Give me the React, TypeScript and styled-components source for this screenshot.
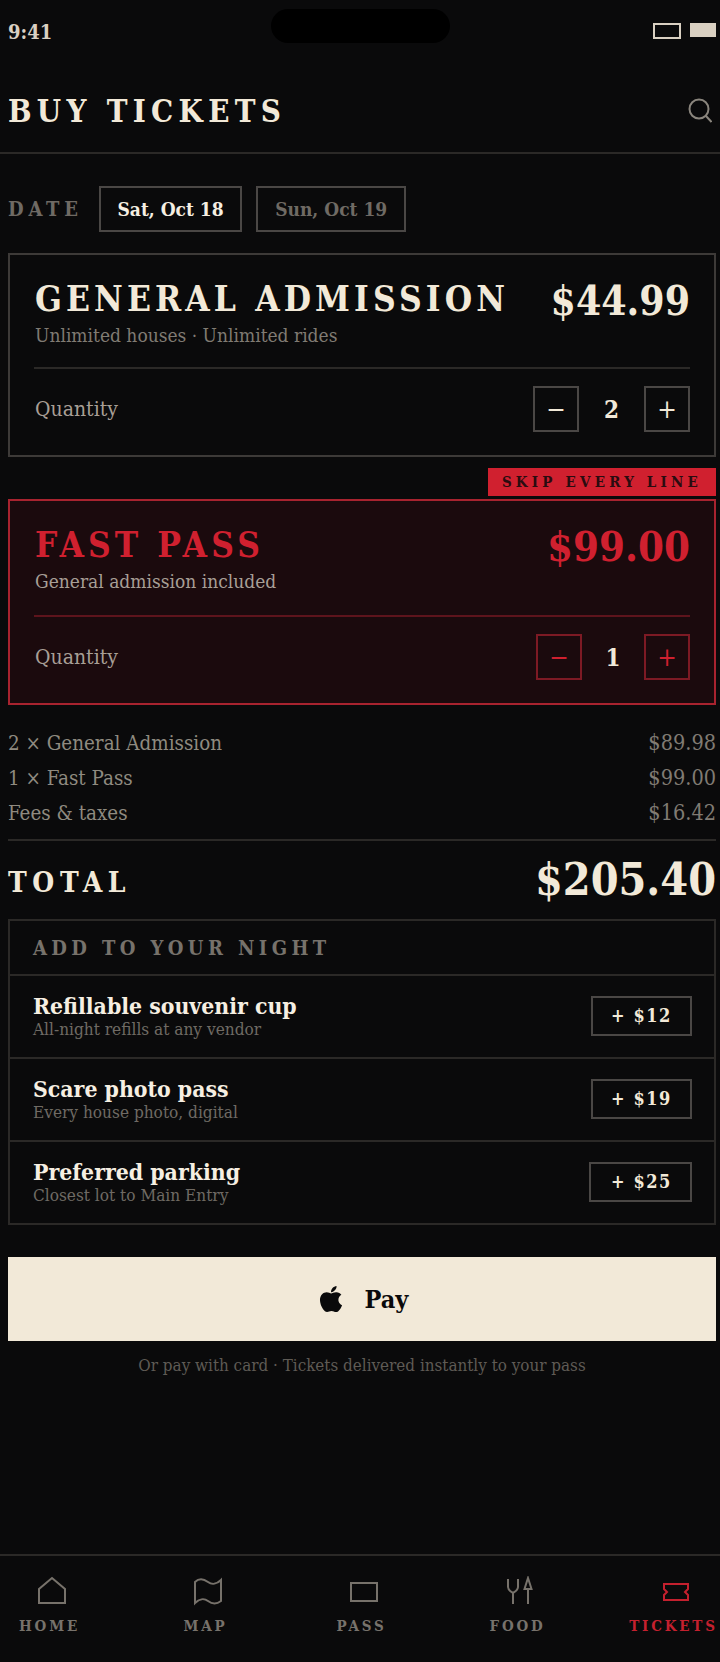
import styled, { createGlobalStyle } from "styled-components";
import { FaApple } from "react-icons/fa";

const serif = `"DejaVu Serif Condensed", "DejaVu Serif", "Liberation Serif", serif`;

const GlobalStyle = createGlobalStyle`
  html, body {
    margin: 0;
    padding: 0;
    background: #0a0a0b;
  }
  * { box-sizing: border-box; }
`;

const Page = styled.div`
  width: 720px;
  height: 1662px;
  display: flex;
  flex-direction: column;
  background: #0a0a0b;
  color: #f2e9d8;
  font-family: ${serif};
  overflow: hidden;
`;

const StatusBar = styled.div`
  height: 60px;
  padding: 22px 4px 0 8px;
  display: flex;
  justify-content: space-between;
  align-items: flex-start;
  position: relative;
`;

const Clock = styled.span`
  font-size: 20px;
  line-height: 20px;
  font-weight: 700;
  color: #d9d0c2;
`;

const Notch = styled.div`
  position: absolute;
  left: 271px;
  top: 9px;
  width: 179px;
  height: 34px;
  border-radius: 17px;
  background: #000;
`;

const StatusIcons = styled.div`
  display: flex;
  gap: 9px;
  padding-top: 1px;
`;

const Signal = styled.div`
  width: 28px;
  height: 16px;
  border: 2px solid #d9d0c2;
`;

const Battery = styled.div`
  width: 26px;
  height: 14px;
  background: #d9d0c2;
`;

const Header = styled.header`
  height: 94px;
  padding: 10px 8px 0;
  display: flex;
  justify-content: space-between;
  align-items: center;
  border-bottom: 2px solid #2b2927;
`;

const Title = styled.h1`
  margin: 0;
  font-size: 31px;
  font-weight: 700;
  letter-spacing: 5.3px;
  color: #f2e9d8;
`;

const SearchIcon = styled.svg`
  display: block;
  stroke: #8a857d;
`;

const Content = styled.main`
  padding: 0 4px 0 8px;
  display: flex;
  flex-direction: column;
`;

const DateRow = styled.div`
  margin: 32px 0 21px;
  display: flex;
  align-items: center;
`;

const DateLabel = styled.span`
  width: 91px;
  font-size: 20px;
  font-weight: 700;
  letter-spacing: 4.8px;
  color: #6f6a64;
`;

const DateChip = styled.div<{ $active?: boolean }>`
  height: 46px;
  padding: 0 ${(p) => (p.$active ? 16.5 : 17)}px;
  margin-right: 14px;
  display: flex;
  align-items: center;
  border: 2px solid #4a4745;
  font-size: 19px;
  font-weight: 700;
  color: ${(p) => (p.$active ? "#f6efe2" : "#6f6a64")};
`;

const Card = styled.section<{ $fast?: boolean }>`
  padding: 24px 24px 23px 25px;
  border: 2px solid ${(p) => (p.$fast ? "#a8232f" : "#3d3a38")};
  background: ${(p) => (p.$fast ? "#1b0a0d" : "transparent")};
`;

const CardTop = styled.div`
  display: flex;
  justify-content: space-between;
  align-items: flex-start;
`;

const CardName = styled.h2<{ $fast?: boolean }>`
  margin: 0;
  font-size: 35px;
  line-height: 40px;
  font-weight: 700;
  letter-spacing: 4.1px;
  color: ${(p) => (p.$fast ? "#d0202f" : "#f2e9d8")};
`;

const CardPrice = styled.div<{ $fast?: boolean }>`
  height: 40px;
  padding-top: 2px;
  font-size: ${(p) => (p.$fast ? 41.5 : 40.5)}px;
  line-height: 40px;
  font-weight: 700;
  color: ${(p) => (p.$fast ? "#d0202f" : "#f2e9d8")};
`;

const CardSub = styled.p<{ $fast?: boolean }>`
  margin: 4px 0 0;
  font-size: 19px;
  line-height: 24px;
  color: ${(p) => (p.$fast ? "#a89f96" : "#807b73")};
`;

const CardDivider = styled.div<{ $fast?: boolean }>`
  height: 2px;
  margin: ${(p) => (p.$fast ? 22 : 20)}px 0 17px -1px;
  background: ${(p) => (p.$fast ? "#5e141c" : "#2b2927")};
`;

const QtyRow = styled.div`
  display: flex;
  justify-content: space-between;
  align-items: center;
`;

const QtyLabel = styled.span`
  font-size: 21px;
  color: #a89f96;
`;

const Stepper = styled.div`
  display: flex;
  align-items: center;
`;

const StepButton = styled.div<{ $fast?: boolean }>`
  width: 46px;
  height: 46px;
  display: flex;
  align-items: center;
  justify-content: center;
  border: 2px solid ${(p) => (p.$fast ? "#7d1a24" : "#4a4745")};
  font-size: 26px;
  font-weight: 400;
  color: ${(p) => (p.$fast ? "#d0202f" : "#f2e9d8")};
`;

const QtyValue = styled.span<{ $wide?: boolean }>`
  width: ${(p) => (p.$wide ? 65 : 62)}px;
  text-align: center;
  font-size: 24px;
  font-weight: 700;
`;

const TagRow = styled.div`
  display: flex;
  justify-content: flex-end;
  margin: 11px 0 3px;
`;

const Tag = styled.div`
  width: 228px;
  height: 28px;
  display: flex;
  align-items: center;
  justify-content: center;
  background: #d0202f;
  color: #2a0c10;
  font-size: 15px;
  font-weight: 700;
  letter-spacing: 4.2px;
`;

const Breakdown = styled.div`
  margin-top: 20px;
  display: flex;
  flex-direction: column;
`;

const LineItem = styled.div`
  height: 35px;
  display: flex;
  justify-content: space-between;
  align-items: center;
  font-size: 20.4px;
  color: #8f8a80;
`;

const LinePrice = styled.span`
  font-size: 21.5px;
  color: #807b73;
`;

const TotalRow = styled.div`
  margin-top: 9px;
  height: 80px;
  padding-top: 4px;
  border-top: 2px solid #2b2927;
  display: flex;
  justify-content: space-between;
  align-items: center;
`;

const TotalLabel = styled.span`
  font-size: 28px;
  font-weight: 700;
  letter-spacing: 5.6px;
`;

const TotalPrice = styled.span`
  margin-bottom: 6px;
  font-size: 44.5px;
  font-weight: 700;
`;

const Addons = styled.section`
  border: 2px solid #2b2927;
`;

const AddonsHeader = styled.div`
  height: 53px;
  padding: 0 23px;
  display: flex;
  align-items: center;
  font-size: 20px;
  font-weight: 700;
  letter-spacing: 4.4px;
  color: #77726b;
`;

const AddonRow = styled.div`
  height: 83px;
  padding: 0 22px 2px 23px;
  display: flex;
  justify-content: space-between;
  align-items: center;
  border-top: 2px solid #2b2927;
`;

const AddonName = styled.div`
  font-size: 22.8px;
  line-height: 26px;
  font-weight: 700;
  color: #f6efe2;
`;

const AddonSub = styled.div`
  font-size: 17.1px;
  line-height: 20px;
  color: #6f6a64;
`;

const AddButton = styled.div<{ $wide?: boolean }>`
  height: 40px;
  padding: 0 18px 0 ${(p) => (p.$wide ? 20 : 18)}px;
  display: flex;
  align-items: center;
  border: 2px solid #4a4745;
  font-size: 18px;
  font-weight: 700;
  letter-spacing: 1.6px;
`;

const PayButton = styled.div`
  margin-top: 32px;
  height: 84px;
  display: flex;
  align-items: center;
  justify-content: center;
  gap: 19px;
  background: #f2e9d8;
  color: #0a0a0b;
  font-size: 25px;
  font-weight: 700;
`;

const Footnote = styled.p`
  margin: 12px 0 0;
  text-align: center;
  font-size: 16.9px;
  line-height: 24px;
  color: #5f5b55;
`;

const TabBar = styled.nav`
  margin-top: auto;
  height: 108px;
  padding: 20px 0 0 3px;
  border-top: 2px solid #2b2927;
  display: grid;
  grid-template-columns: repeat(5, 156px);
  justify-content: center;
`;

const Tab = styled.div<{ $active?: boolean }>`
  display: flex;
  flex-direction: column;
  align-items: center;
  gap: 10px;
  color: ${(p) => (p.$active ? "#c4202e" : "#77726b")};
  font-size: 15px;
  line-height: 20px;
  font-weight: 700;
  letter-spacing: 2.8px;
  svg {
    display: block;
    margin-left: 4px;
  }
`;

const Icon = ({ children }: { children: React.ReactNode }) => (
  <svg width="30" height="30" viewBox="0 0 30 30" fill="none" stroke="currentColor" strokeWidth="2">
    {children}
  </svg>
);

const tabs = [
  { label: "HOME", icon: <path d="M2 27V13L15 2l13 11v14z" /> },
  { label: "MAP", icon: <path d="M2 6C6 2 11 3 15 6s9 2 13-2v21c-4 3-9 3-13 0s-9-2-13 2z" /> },
  { label: "PASS", icon: <rect x="2" y="7" width="26" height="18" /> },
  {
    label: "FOOD",
    icon: (
      <>
        <path d="M3 3v8c0 3 2 4 5 6 3-2 5-3 5-6V3M8 17v11" />
        <path d="M23 2l3.500 11h-7zM23 13v15" />
      </>
    ),
  },
  { label: "TICKETS", icon: <path d="M3 8h24v5l-3 3 3 3v5H3v-5l3-3-3-3z" />, active: true },
];

const addons = [
  { name: "Refillable souvenir cup", sub: "All-night refills at any vendor", price: "+ $12" },
  { name: "Scare photo pass", sub: "Every house photo, digital", price: "+ $19" },
  { name: "Preferred parking", sub: "Closest lot to Main Entry", price: "+ $25", wide: true },
];

export default function App() {
  return (
    <>
      <GlobalStyle />
      <Page>
        <StatusBar>
          <Clock>9:41</Clock>
          <Notch />
          <StatusIcons>
            <Signal />
            <Battery />
          </StatusIcons>
        </StatusBar>
        <Header>
          <Title>BUY TICKETS</Title>
          <SearchIcon width="26" height="26" viewBox="0 0 26 26" fill="none" strokeWidth="2">
            <circle cx="13" cy="11" r="9.500" />
            <path d="M20 18l5.500 6" />
          </SearchIcon>
        </Header>
        <Content>
          <DateRow>
            <DateLabel>DATE</DateLabel>
            <DateChip $active>Sat, Oct 18</DateChip>
            <DateChip>Sun, Oct 19</DateChip>
          </DateRow>

          <Card>
            <CardTop>
              <CardName>GENERAL ADMISSION</CardName>
              <CardPrice>$44.99</CardPrice>
            </CardTop>
            <CardSub>Unlimited houses · Unlimited rides</CardSub>
            <CardDivider />
            <QtyRow>
              <QtyLabel>Quantity</QtyLabel>
              <Stepper>
                <StepButton>−</StepButton>
                <QtyValue $wide>2</QtyValue>
                <StepButton>+</StepButton>
              </Stepper>
            </QtyRow>
          </Card>

          <TagRow>
            <Tag>SKIP EVERY LINE</Tag>
          </TagRow>

          <Card $fast>
            <CardTop>
              <CardName $fast>FAST PASS</CardName>
              <CardPrice $fast>$99.00</CardPrice>
            </CardTop>
            <CardSub $fast>General admission included</CardSub>
            <CardDivider $fast />
            <QtyRow>
              <QtyLabel>Quantity</QtyLabel>
              <Stepper>
                <StepButton $fast>−</StepButton>
                <QtyValue>1</QtyValue>
                <StepButton $fast>+</StepButton>
              </Stepper>
            </QtyRow>
          </Card>

          <Breakdown>
            <LineItem><span>2 × General Admission</span><LinePrice>$89.98</LinePrice></LineItem>
            <LineItem><span>1 × Fast Pass</span><LinePrice>$99.00</LinePrice></LineItem>
            <LineItem><span>Fees &amp; taxes</span><LinePrice>$16.42</LinePrice></LineItem>
          </Breakdown>

          <TotalRow>
            <TotalLabel>TOTAL</TotalLabel>
            <TotalPrice>$205.40</TotalPrice>
          </TotalRow>

          <Addons>
            <AddonsHeader>ADD TO YOUR NIGHT</AddonsHeader>
            {addons.map((a) => (
              <AddonRow key={a.name}>
                <div>
                  <AddonName>{a.name}</AddonName>
                  <AddonSub>{a.sub}</AddonSub>
                </div>
                <AddButton $wide={a.wide}>{a.price}</AddButton>
              </AddonRow>
            ))}
          </Addons>

          <PayButton>
            <FaApple size={30} />
            <span>Pay</span>
          </PayButton>
          <Footnote>Or pay with card · Tickets delivered instantly to your pass</Footnote>
        </Content>

        <TabBar>
          {tabs.map((t) => (
            <Tab key={t.label} $active={t.active}>
              <Icon>{t.icon}</Icon>
              <span>{t.label}</span>
            </Tab>
          ))}
        </TabBar>
      </Page>
    </>
  );
}
